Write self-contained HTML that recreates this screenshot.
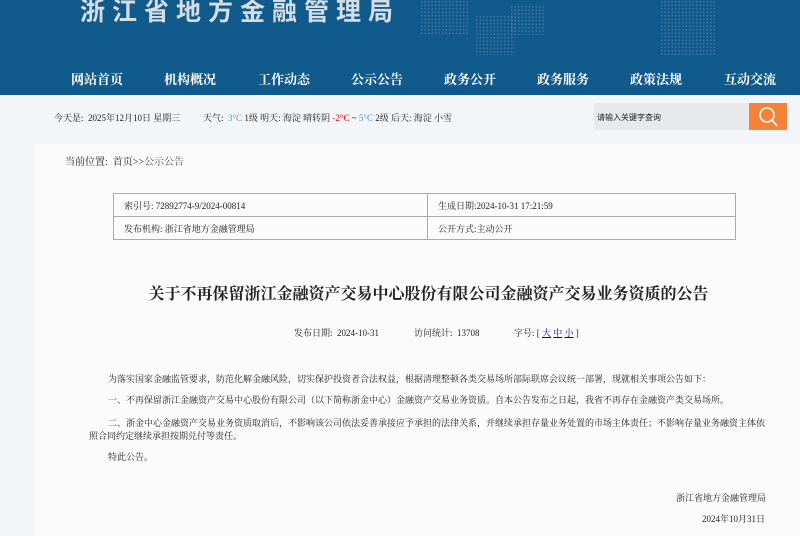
<!DOCTYPE html>
<html><head><meta charset="utf-8"><style>
*{margin:0;padding:0;box-sizing:border-box}
body{width:800px;height:536px;overflow:hidden;background:#f3f5f9;font-family:"Liberation Serif","Noto Serif CJK SC",serif;color:#222;position:relative}
.a{position:absolute;white-space:nowrap}
#hd{position:absolute;left:0;top:0;width:800px;height:95px;background:#115a8c}
.nav{position:absolute;top:69px;color:#fff;font-size:13px;font-weight:bold;transform:translateX(-50%);white-space:nowrap}
.dots{position:absolute;background-image:radial-gradient(circle,rgba(150,180,205,.3) 0.8px,transparent 1.1px);background-size:3.5px 3.5px}
#panel{position:absolute;left:35px;top:144px;width:765px;height:392px;background:#fbfbfc}
table{position:absolute;left:113px;top:193px;width:623px;height:47px;border-collapse:collapse;font-size:9px}
td{border:1px solid #aaa;padding-left:10px}
.p{font-size:9px}
</style></head><body>
<div id="hd">
<div class="dots" style="left:420px;top:0;width:50px;height:36px"></div>
<div class="dots" style="left:475px;top:15px;width:40px;height:40px"></div>
<div class="dots" style="left:510px;top:5px;width:35px;height:30px"></div>
<div class="dots" style="left:660px;top:0;width:55px;height:55px"></div>
<div class="a" style="left:80px;top:-8px;font-size:25px;letter-spacing:7px;color:#d6dde3;font-family:'Noto Sans CJK SC',sans-serif;font-weight:bold">浙江省地方金融管理局</div>
<div class="nav" style="left:97px">网站首页</div>
<div class="nav" style="left:190px">机构概况</div>
<div class="nav" style="left:284px">工作动态</div>
<div class="nav" style="left:377px">公示公告</div>
<div class="nav" style="left:470px">政务公开</div>
<div class="nav" style="left:563px">政务服务</div>
<div class="nav" style="left:656px">政策法规</div>
<div class="nav" style="left:750px">互动交流</div>
</div>
<div class="a" style="left:54px;top:111px;font-size:9px">今天是:&nbsp; 2025年12月10日 星期三</div>
<div class="a" style="left:203px;top:111px;font-size:9px;width:255px;overflow:hidden">天气:&nbsp; <span style="color:#3a9ed8">3°C</span> 1级 明天: 海淀 晴转阴 <span style="color:#e00">-2°C</span> ~ <span style="color:#3a9ed8">5°C</span> 2级 后天: 海淀 小雪</div>
<div class="a" style="left:594px;top:103px;width:155px;height:27px;background:#e8e9ea;font-size:8px;padding:9px 0 0 3px;font-family:'Noto Sans CJK SC',sans-serif">请输入关键字查询</div>
<div class="a" style="left:749px;top:103px;width:38px;height:27px;background:#f6823a">
<svg width="38" height="27"><circle cx="18" cy="12" r="7" fill="none" stroke="#fff" stroke-width="1.6"/><line x1="23" y1="17" x2="28" y2="23" stroke="#fff" stroke-width="1.6"/></svg></div>
<div id="panel"></div>
<div class="a" style="left:65px;top:153px;font-size:10px">当前位置:&nbsp; 首页&gt;&gt;<span style="color:#555">公示公告</span></div>
<table><tr><td style="width:314px">索引号: 72892774-9/2024-00814</td><td>生成日期:2024-10-31 17:21:59</td></tr>
<tr><td>发布机构: 浙江省地方金融管理局</td><td>公开方式:主动公开</td></tr></table>
<div class="a" style="left:0;width:800px;text-align:center;top:281px;font-size:16px;font-weight:bold;padding-left:57px">关于不再保留浙江金融资产交易中心股份有限公司金融资产交易业务资质的公告</div>
<div class="a p" style="left:294px;top:326px">发布日期:&nbsp; 2024-10-31</div>
<div class="a p" style="left:414px;top:326px">访问统计:&nbsp; 13708</div>
<div class="a p" style="left:514px;top:326px">字号: [ <span style="color:#00c;text-decoration:underline">大</span> <span style="color:#00c;text-decoration:underline">中</span> <span style="color:#00c;text-decoration:underline">小</span> ]</div>
<div class="a p" style="left:108px;top:372px">为落实国家金融监管要求，防范化解金融风险，切实保护投资者合法权益，根据清理整顿各类交易场所部际联席会议统一部署，现就相关事项公告如下：</div>
<div class="a p" style="left:108px;top:393px">一、不再保留浙江金融资产交易中心股份有限公司（以下简称浙金中心）金融资产交易业务资质。自本公告发布之日起，我省不再存在金融资产类交易场所。</div>
<div class="a p" style="left:108px;top:416px">二、浙金中心金融资产交易业务资质取消后，不影响该公司依法妥善承接应予承担的法律关系，并继续承担存量业务处置的市场主体责任；不影响存量业务融资主体依</div>
<div class="a p" style="left:89px;top:429px">照合同约定继续承担按期兑付等责任。</div>
<div class="a p" style="left:108px;top:450px">特此公告。</div>
<div class="a p" style="left:676px;top:491px">浙江省地方金融管理局</div>
<div class="a p" style="left:702px;top:512px">2024年10月31日</div>
</body></html>
